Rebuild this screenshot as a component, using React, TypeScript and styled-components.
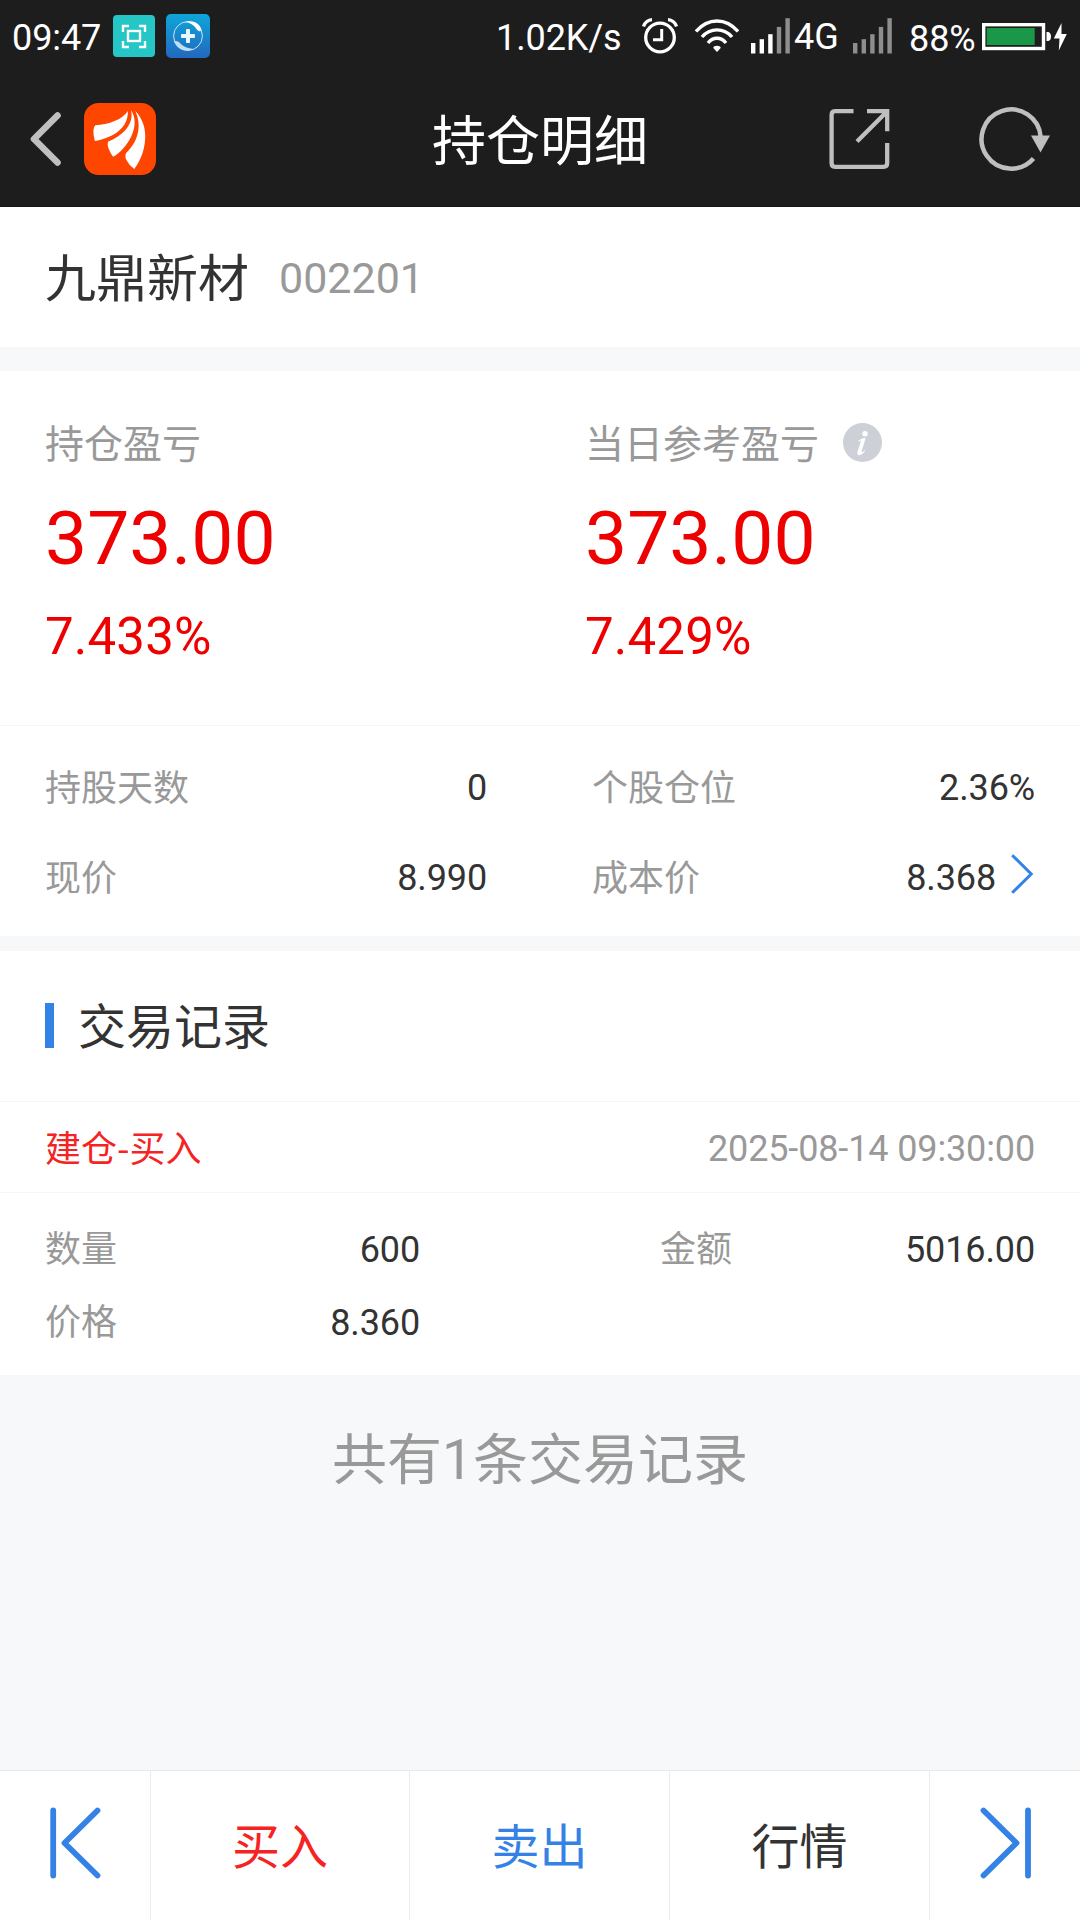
import React from "react";
import styled, { createGlobalStyle } from "styled-components";

const GlobalStyle = createGlobalStyle`
  * { box-sizing: border-box; }
  html, body { margin: 0; padding: 0; background: #f7f8fa; }
  body {
    font-family: Roboto, "Noto Sans CJK SC", sans-serif;
    color: #333;
  }
  svg { display: block; flex: none; }
`;

const Page = styled.div`
  width: 1080px;
  height: 1920px;
  display: flex;
  flex-direction: column;
  background: #f7f8fa;
  overflow: hidden;
`;

const StatusBar = styled.div`
  height: 72px;
  display: flex;
  align-items: flex-start;
  padding: 0 12px 0 12px;
  background: #1d1d1d;
  color: #fff;
`;

const StatusText = styled.span<{ $width: number; $top?: number; $left?: number }>`
  width: ${(p) => p.$width}px;
  margin: ${(p) => p.$top ?? 18}px 0 0 ${(p) => p.$left ?? 0}px;
  font-size: 36px;
  line-height: 40px;
  letter-spacing: -0.1px;
  white-space: nowrap;
`;

const StatusIcon = styled.div<{ $top: number; $left: number }>`
  margin: ${(p) => p.$top}px 0 0 ${(p) => p.$left}px;
`;

const StatusSpacer = styled.div`
  flex: 1;
`;

const NavBar = styled.header`
  height: 135px;
  display: grid;
  grid-template-columns: 1fr auto 1fr;
  align-items: center;
  padding: 0 29px 0 29px;
  background: #1d1d1d;
  border-bottom: 1px solid #161415;
  color: #fff;
`;

const NavGroup = styled.div<{ $end?: boolean; $gap: number }>`
  display: flex;
  align-items: center;
  justify-content: ${(p) => (p.$end ? "flex-end" : "flex-start")};
  gap: ${(p) => p.$gap}px;
`;

const NavTitle = styled.h1`
  margin: 7px 0 0;
  font-size: 54px;
  font-weight: 400;
  line-height: 70px;
`;

const StockHeader = styled.section`
  height: 140px;
  display: flex;
  align-items: center;
  gap: 30px;
  padding: 4px 45px 0;
  background: #fff;
`;

const StockName = styled.span`
  padding-top: 2px;
  font-size: 51px;
  line-height: 60px;
`;

const StockCode = styled.span`
  padding-bottom: 2px;
  font-size: 43px;
  line-height: 60px;
  color: #999;
`;

const Card = styled.section<{ $gap: number }>`
  margin-top: ${(p) => p.$gap}px;
  background: #fff;
`;

const ProfitGrid = styled.div`
  height: 354px;
  display: grid;
  grid-template-columns: 1fr 1fr;
`;

const ProfitColumn = styled.div`
  padding: 49px 0 0 45px;
`;

const ProfitLabel = styled.div`
  height: 50px;
  display: flex;
  align-items: center;
  gap: 24px;
  font-size: 39px;
  line-height: 50px;
  color: #999;
`;

const InfoBadge = styled.span`
  width: 39px;
  height: 39px;
  margin-top: -5px;
`;

const ProfitAmount = styled.div`
  margin-top: 23px;
  font-size: 75px;
  line-height: 90px;
  color: #ee0000;
`;

const ProfitRate = styled.div`
  margin-top: 24px;
  font-size: 51px;
  line-height: 60px;
  letter-spacing: 0.2px;
  color: #ee0000;
`;

const DetailGrid = styled.div`
  height: 211px;
  display: grid;
  grid-template-columns: 442px 443px;
  grid-auto-rows: 90px;
  column-gap: 105px;
  padding: 17px 45px 0;
  border-top: 1px solid #f5f6f7;
`;

const RecordGrid = styled.div`
  height: 183px;
  display: grid;
  grid-template-columns: 375px 375px;
  grid-auto-rows: 73px;
  justify-content: space-between;
  padding: 20px 45px 0;
  border-top: 1px solid #f5f6f7;
`;

const Field = styled.div`
  display: flex;
  align-items: center;
  justify-content: space-between;
  font-size: 36px;
  line-height: 50px;
`;

const FieldLabel = styled.span`
  padding-top: 1px;
  color: #999;
`;

const FieldValue = styled.span`
  display: flex;
  align-items: center;
  gap: 14px;
  letter-spacing: -0.13px;
`;

const LinkArrow = styled.svg`
  margin-top: -9px;
`;

const SectionTitle = styled.h2`
  height: 150px;
  margin: 0;
  display: flex;
  align-items: center;
  gap: 24px;
  padding: 0 45px;
  font-size: 48px;
  font-weight: 400;
  line-height: 60px;

  &::before {
    content: "";
    width: 9px;
    height: 45px;
    margin-bottom: 1px;
    background: #3482e6;
  }
`;

const SectionTitleText = styled.span`
  padding-top: 3px;
`;

const RecordHead = styled.div`
  height: 91px;
  display: flex;
  align-items: center;
  justify-content: space-between;
  padding: 3px 45px 0;
  border-top: 1px solid #f5f6f7;
  font-size: 36px;
  line-height: 50px;
`;

const RecordType = styled.span`
  margin-bottom: 6px;
  font-family: "Noto Sans CJK SC", sans-serif;
  color: #f52323;
`;

const RecordTime = styled.span`
  letter-spacing: -0.13px;
  color: #999;
`;

const Summary = styled.p`
  flex: 1;
  margin: 0;
  padding-top: 50px;
  font-size: 55px;
  line-height: 70px;
  text-align: center;
  color: #999;
`;

const ActionBar = styled.nav`
  height: 150px;
  display: grid;
  grid-template-columns: 150px 259px 260px 260px 151px;
  background: #fff;
  border-top: 1px solid #e8eaec;
`;

const Action = styled.button<{ $color: string }>`
  display: flex;
  align-items: center;
  justify-content: center;
  margin: 0;
  padding: 5px 0 0;
  border: 0;
  border-left: 1px solid #ebecee;
  background: none;
  font-family: inherit;
  font-size: 48px;
  line-height: 60px;
  color: ${(p) => p.$color};

  &:first-child { border-left: 0; }
`;

const StepIcon = styled.svg`
  margin-top: -10px;
`;

const ScanAppIcon = () => (
  <svg width="42" height="42" viewBox="0 0 42 42">
    <rect width="42" height="42" rx="4" fill="#24c6c6" />
    <g fill="none" stroke="#fff" strokeWidth="2.4">
      <path d="M10 17V11H16M26 11H32V17M32 26V32H26M16 32H10V26" />
      <rect x="15" y="16" width="12" height="10" />
    </g>
  </svg>
);

const CareAppIcon = () => (
  <svg width="44" height="44" viewBox="0 0 44 44">
    <defs>
      <linearGradient id="care" x1="0" y1="0" x2="0" y2="1">
        <stop offset="0" stopColor="#0ea5d9" />
        <stop offset="1" stopColor="#2368bd" />
      </linearGradient>
    </defs>
    <rect width="44" height="44" rx="5" fill="url(#care)" />
    <circle cx="22" cy="22" r="14.4" fill="none" stroke="#c9e4f7" strokeWidth="1" />
    <path d="M19 8C26 5.5 34 9 35.5 16C34 18.500 32 17 30.500 15C28 11 24 8.800 19 8Z" fill="#fff" />
    <path d="M8 27C12 26.500 13 28 16 31C19 33.500 23 34.500 28 35C20 39 10.500 35.500 8 27Z" fill="#bfdff8" />
    <path d="M20.500 15.500h3v5h5v3h-5v5h-3v-5h-5v-3h5Z" fill="#e9f6ff" stroke="#e9f6ff" strokeWidth="1" strokeLinejoin="round" />
  </svg>
);

const AlarmIcon = () => (
  <svg width="36" height="36" viewBox="0 0 36 36" fill="none" stroke="#fff">
    <circle cx="18" cy="19.500" r="14.300" strokeWidth="3.300" />
    <path d="M19.700 11V21.800H11" strokeWidth="3" />
    <path d="M1.500 8.500C2.500 5 6 1.800 10 1.700M26 1.700C30 1.800 33.500 5 34.500 8.500" strokeWidth="3.300" />
  </svg>
);

const WifiIcon = () => (
  <svg width="44" height="34" viewBox="0 0 44 34" fill="none" stroke="#fff" strokeWidth="3.400">
    <path d="M1 12.500C13 -1.500 31 -1.500 43 12.500" />
    <path d="M7 18C15 8.500 29 8.500 37 18" />
    <path d="M13 24C18 17.700 26 17.700 31 24" />
    <path d="M22 33L18.300 29C18 26 26 26 25.700 29Z" fill="#fff" stroke="none" />
  </svg>
);

const SignalIcon = ({ level }: { level: number }) => (
  <svg width="39" height="36" viewBox="0 0 39 36">
    {[10.500, 14.300, 19.300, 26.600, 35.300].map((h, i) => (
      <rect key={i} x={i * 8.600} y={35.500 - h} width="4.400" height={h} fill={i < level ? "#fff" : "#8e8e8e"} />
    ))}
  </svg>
);

const BatteryIcon = () => (
  <svg width="86" height="28" viewBox="0 0 86 28">
    <rect x="1.700" y="1.700" width="59.800" height="23.800" fill="none" stroke="#fff" strokeWidth="3.400" />
    <rect x="4.700" y="5" width="48" height="17" fill="#1a9748" />
    <path d="M64.500 9H66.500Q69 10 69 13.500T66.500 18H64.500Z" fill="#fff" />
    <path d="M79.500 0L71.800 15.500H77.500L76.800 27.500L84.800 11H79.500Z" fill="#fff" />
  </svg>
);

const BackIcon = () => (
  <svg width="34" height="56" viewBox="0 0 34 56">
    <path d="M28.500 4.500L5 28L28.500 51.500" fill="none" stroke="#bfbfbf" strokeWidth="6.600" strokeLinecap="round" strokeLinejoin="round" />
  </svg>
);

const BrandLogo = () => (
  <svg width="72" height="72" viewBox="0 0 73 73">
    <rect width="73" height="73" rx="15" fill="#ff4600" />
    <g fill="#fff">
      <path d="M44.500 8C39 17 25 21.500 11.500 22.500Q9.500 24 9.500 28Q9.500 33 11 38.500C27 35.500 45 27 44.500 8Z" />
      <path d="M47.500 7C51.500 21 39 33.500 24.500 39Q23.500 41 24.500 45Q26.500 50.500 29.500 54.500C44 46.500 58.500 22.500 47.500 7Z" />
      <path d="M52 8C59.500 24 54 40 42.500 51Q41.500 53 42.500 57Q45.500 63 51 67C63 51 68 24 52 8Z" />
    </g>
  </svg>
);

const ShareIcon = () => (
  <svg width="61" height="62" viewBox="0 0 61 62" fill="none" stroke="#bfbfbf" strokeWidth="4.300">
    <path d="M24.500 3.100H6Q2.600 3.100 2.600 7V55Q2.600 58.800 6 58.800H54.500Q58.200 58.800 58.200 55V35" />
    <path d="M38 3.100H58.200V23.300M58 3.500L28 33.500" />
  </svg>
);

const RefreshIcon = () => (
  <svg width="72" height="66" viewBox="0 0 72 66">
    <path d="M61.700 31A29.600 29.600 0 1 0 54.500 52.500" fill="none" stroke="#bfbfbf" strokeWidth="4.500" />
    <path d="M52 29.500H71L61.500 46.500Z" fill="#bfbfbf" />
  </svg>
);

const InfoIcon = () => (
  <svg width="39" height="39" viewBox="0 0 39 39">
    <circle cx="19.500" cy="19.500" r="19.500" fill="#cdd1d7" />
    <circle cx="22" cy="10.700" r="2.700" fill="#fff" />
    <path d="M14.500 19.200C17 16 20 14.800 22.600 15L18.600 28.500C18.200 30.200 20 29.500 22.200 26.600C21.800 30 18 32.500 16 32.300C14 32 14 30 14.700 28L18 18.200C17.500 17.500 16 18.300 14.500 19.200Z" fill="#fff" />
  </svg>
);

const FirstIcon = () => (
  <StepIcon width="51" height="72" viewBox="0 0 51 72" fill="none" stroke="#3482e6" strokeWidth="5.800" strokeLinecap="round" strokeLinejoin="round">
    <path d="M3.200 3.500V68.500M47.500 3.500L14.500 36L47.500 68.500" />
  </StepIcon>
);

const LastIcon = () => (
  <StepIcon width="51" height="72" viewBox="0 0 51 72" fill="none" stroke="#3482e6" strokeWidth="5.800" strokeLinecap="round" strokeLinejoin="round">
    <path d="M48 3.500V68.500M3.500 3.500L36.500 36L3.500 68.500" />
  </StepIcon>
);

const ArrowIcon = () => (
  <LinkArrow width="25" height="40" viewBox="0 0 25 40" fill="none" stroke="#3482e6" strokeWidth="3">
    <path d="M2.200 1.200L21.200 20L2.200 38.800" />
  </LinkArrow>
);

export default function App() {
  return (
    <Page>
      <GlobalStyle />
      <StatusBar>
        <StatusText $width={90}>09:47</StatusText>
        <StatusIcon $top={15} $left={11}><ScanAppIcon /></StatusIcon>
        <StatusIcon $top={14} $left={11}><CareAppIcon /></StatusIcon>
        <StatusSpacer />
        <StatusText $width={128}>1.02K/s</StatusText>
        <StatusIcon $top={18} $left={18}><AlarmIcon /></StatusIcon>
        <StatusIcon $top={19} $left={17}><WifiIcon /></StatusIcon>
        <StatusIcon $top={18} $left={12}><SignalIcon level={3} /></StatusIcon>
        <StatusText $width={46} $top={17} $left={4}>4G</StatusText>
        <StatusIcon $top={18} $left={13}><SignalIcon level={0} /></StatusIcon>
        <StatusText $width={68} $top={19} $left={17}>88%</StatusText>
        <StatusIcon $top={23} $left={5}><BatteryIcon /></StatusIcon>
      </StatusBar>

      <NavBar>
        <NavGroup $gap={21}>
          <BackIcon />
          <BrandLogo />
        </NavGroup>
        <NavTitle>持仓明细</NavTitle>
        <NavGroup $gap={89} $end>
          <ShareIcon />
          <RefreshIcon />
        </NavGroup>
      </NavBar>

      <StockHeader>
        <StockName>九鼎新材</StockName>
        <StockCode>002201</StockCode>
      </StockHeader>

      <Card $gap={24}>
        <ProfitGrid>
          <ProfitColumn>
            <ProfitLabel>持仓盈亏</ProfitLabel>
            <ProfitAmount>373.00</ProfitAmount>
            <ProfitRate>7.433%</ProfitRate>
          </ProfitColumn>
          <ProfitColumn>
            <ProfitLabel>
              当日参考盈亏
              <InfoBadge><InfoIcon /></InfoBadge>
            </ProfitLabel>
            <ProfitAmount>373.00</ProfitAmount>
            <ProfitRate>7.429%</ProfitRate>
          </ProfitColumn>
        </ProfitGrid>
        <DetailGrid>
          <Field>
            <FieldLabel>持股天数</FieldLabel>
            <FieldValue>0</FieldValue>
          </Field>
          <Field>
            <FieldLabel>个股仓位</FieldLabel>
            <FieldValue>2.36%</FieldValue>
          </Field>
          <Field>
            <FieldLabel>现价</FieldLabel>
            <FieldValue>8.990</FieldValue>
          </Field>
          <Field>
            <FieldLabel>成本价</FieldLabel>
            <FieldValue>
              8.368
              <ArrowIcon />
            </FieldValue>
          </Field>
        </DetailGrid>
      </Card>

      <Card $gap={15}>
        <SectionTitle>
          <SectionTitleText>交易记录</SectionTitleText>
        </SectionTitle>
        <RecordHead>
          <RecordType>建仓-买入</RecordType>
          <RecordTime>2025-08-14 09:30:00</RecordTime>
        </RecordHead>
        <RecordGrid>
          <Field>
            <FieldLabel>数量</FieldLabel>
            <FieldValue>600</FieldValue>
          </Field>
          <Field>
            <FieldLabel>金额</FieldLabel>
            <FieldValue>5016.00</FieldValue>
          </Field>
          <Field>
            <FieldLabel>价格</FieldLabel>
            <FieldValue>8.360</FieldValue>
          </Field>
        </RecordGrid>
      </Card>

      <Summary>共有1条交易记录</Summary>

      <ActionBar>
        <Action $color="#3482e6" aria-label="上一只"><FirstIcon /></Action>
        <Action $color="#f52323">买入</Action>
        <Action $color="#3482e6">卖出</Action>
        <Action $color="#333">行情</Action>
        <Action $color="#3482e6" aria-label="下一只"><LastIcon /></Action>
      </ActionBar>
    </Page>
  );
}
